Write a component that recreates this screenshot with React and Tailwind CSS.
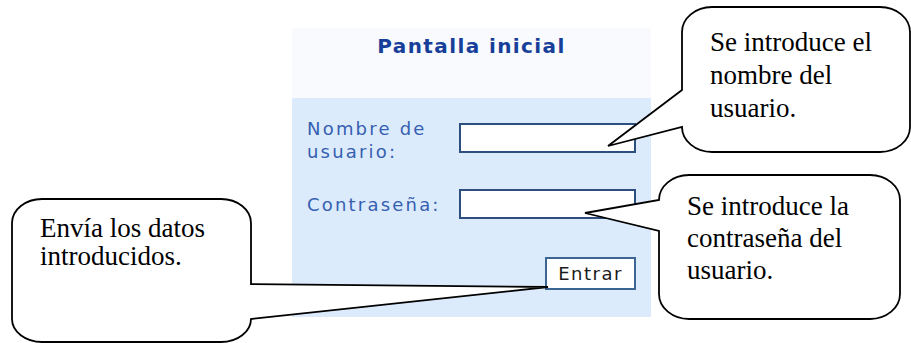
import React from "react";

// speech bubble outlines, drawn over the page (coords of the 911x343 canvas)
const bubbles = [
  {
    // nombre de usuario
    d: "M712,7 H880 A30,25 0 0 1 910,32 V127 A30,25 0 0 1 880,152 H712 A30,25 0 0 1 682,127 L608,146 L682,90 V32 A30,25 0 0 1 712,7 Z",
    text: ["Se introduce el", "nombre del", "usuario."],
    className: "left-[710px] top-[26px] leading-[33px]",
  },
  {
    // contraseña
    d: "M689,175 H870 A30,25 0 0 1 900,200 V294 A30,25 0 0 1 870,319 H689 A30,25 0 0 1 659,294 V231 L585,213 L659,200 A30,25 0 0 1 689,175 Z",
    text: ["Se introduce la", "contraseña del", "usuario."],
    className: "left-[687px] top-[190px] leading-[32px]",
  },
  {
    // boton entrar
    d: "M42,199 H221 A30,24 0 0 1 251,223 V284 L548,287 L251,319 A30,23 0 0 1 221,342 H42 A30,23 0 0 1 12,319 V223 A30,24 0 0 1 42,199 Z",
    text: ["Envía los datos", "introducidos."],
    className: "left-[40px] top-[214px] leading-[28px]",
  },
];

const Bubbles = () => {
  return (
    <>
      <svg
        className="pointer-events-none absolute left-0 top-0"
        width="911"
        height="343"
        viewBox="0 0 911 343"
      >
        {bubbles.map((b, i) => (
          <path key={i} d={b.d} fill="#ffffff" stroke="#000000" strokeWidth="1.8" strokeLinejoin="miter" />
        ))}
      </svg>
      {bubbles.map((b, i) => (
        <div
          key={i}
          className={`absolute whitespace-nowrap font-['Liberation_Serif',serif] text-[27px] text-black ${b.className}`}
        >
          {b.text.map((line, j) => (
            <div key={j}>{line}</div>
          ))}
        </div>
      ))}
    </>
  );
};

const App = () => {
  return (
    <div className="relative h-[343px] w-[911px] overflow-hidden bg-white">
      {/* login panel */}
      <div className="ml-[292px] w-[359px] pt-[28px] font-['DejaVu_Sans',sans-serif]">
        <div className="h-[70px] bg-[#f8fafd] pt-[6px] text-center">
          <h1 className="text-[20px] font-bold leading-[24px] tracking-[1.4px] text-[#173f99]">Pantalla inicial</h1>
        </div>

        <div className="h-[219px] bg-[#dcebfc] px-[15px] pt-[19px]">
          <div className="flex items-start">
            <label className="w-[152px] text-[18px] leading-[23px] tracking-[2.2px] text-[#3660b0]">
              Nombre de
              <br />
              usuario:
            </label>
            <input type="text" className="mt-[6px] block h-[30px] w-[177px] border-2 border-[#2d4f7f] bg-white" />
          </div>

          <div className="mt-[26px] flex items-start">
            <label className="mt-[4px] w-[152px] text-[18px] leading-[23px] tracking-[2.2px] text-[#3660b0]">
              Contraseña:
            </label>
            <input type="password" className="block h-[30px] w-[177px] border-2 border-[#2d4f7f] bg-white" />
          </div>

          <div className="mt-[38px] flex justify-end">
            <button className="h-[33px] w-[91px] border-2 border-[#3d6594] bg-white text-[18px] leading-[23px] tracking-[1.5px] text-[#1a1a1a]">
              Entrar
            </button>
          </div>
        </div>
      </div>

      <Bubbles />
    </div>
  );
};

export default App;
